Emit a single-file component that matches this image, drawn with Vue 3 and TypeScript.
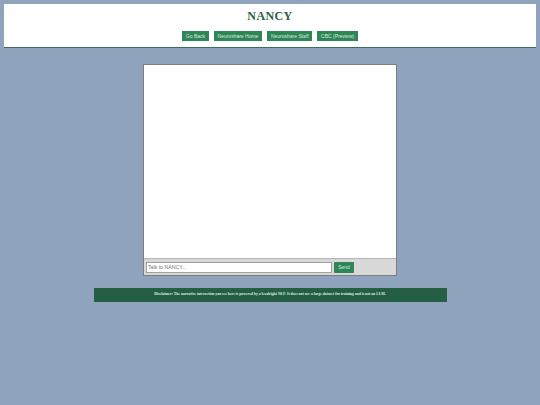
<script setup lang="ts">
const links: string[] = ['Go Back', 'Neuroshare Home', 'Neuroshare Staff', 'CBC (Preview)']
</script>

<template>
  <div class="page">
    <header class="header">
      <h1 class="title">NANCY</h1>
      <nav class="nav">
        <a v-for="link in links" :key="link" class="btn" href="#">{{ link }}</a>
      </nav>
    </header>
    <main class="chat">
      <div class="log"></div>
      <div class="bar">
        <input class="input" type="text" placeholder="Talk to NANCY..." />
        <button class="btn send" type="button">Send</button>
      </div>
    </main>
    <footer class="note">
      <p><strong>Disclaimer:</strong> The narrative interaction you see here is powered by a lexalright NLP. It does not use a large dataset for training and is not an LLM.</p>
    </footer>
  </div>
</template>

<style scoped>
.page {
  min-height: 405px;
  box-sizing: border-box;
  padding-top: 4px;
  background: #8fa3bc;
  display: flex;
  flex-direction: column;
  align-items: center;
  font-family: "Liberation Sans", Arial, sans-serif;
}
.header {
  width: 532px;
  height: 43px;
  box-sizing: content-box;
  background: #fff;
  border-bottom: 1px solid #3d6f57;
  display: flex;
  flex-direction: column;
  align-items: center;
}
.title {
  margin: 5px 0 0;
  height: 14px;
  font-family: "Liberation Serif", "Times New Roman", serif;
  font-size: 12px;
  line-height: 14px;
  font-weight: 700;
  letter-spacing: 0.4px;
  color: #2a6044;
}
.nav {
  margin-top: 8px;
  display: flex;
  gap: 5px;
}
.btn {
  display: block;
  height: 10px;
  padding: 0 3.75px;
  border: 0;
  background: #2e8555;
  color: #d9ebe0;
  font-family: "Liberation Sans", Arial, sans-serif;
  font-size: 5px;
  line-height: 10px;
  text-decoration: none;
}
.chat {
  margin-top: 16px;
  width: 252px;
  height: 210px;
  border: 1px solid #7d7d7d;
  background: #fff;
  display: flex;
  flex-direction: column;
}
.log {
  flex: 1;
}
.bar {
  height: 16px;
  border-top: 1px solid #b5b5b5;
  background: #d8d8d8;
  display: flex;
  align-items: center;
  padding-left: 2px;
  gap: 2px;
}
.input {
  width: 182px;
  height: 9px;
  box-sizing: content-box;
  margin: 0;
  padding: 0 1px;
  border: 1px solid #a0a0a0;
  background: #fff;
  font-family: "Liberation Sans", Arial, sans-serif;
  font-size: 5.2px;
  outline: none;
}
.input::placeholder {
  color: #777;
}
.send {
  height: 11px;
  width: 20px;
  padding: 0;
  text-align: center;
  line-height: 11px;
  border-radius: 1px;
}
.note {
  margin-top: 12px;
  width: 353px;
  height: 14px;
  background: #245f43;
  display: flex;
  align-items: center;
  justify-content: center;
}
.note p {
  margin: 0 0 3px;
  font-family: "Liberation Serif", "Times New Roman", serif;
  font-size: 3.75px;
  font-weight: 700;
  color: #dfe9e4;
  white-space: nowrap;
}
</style>
